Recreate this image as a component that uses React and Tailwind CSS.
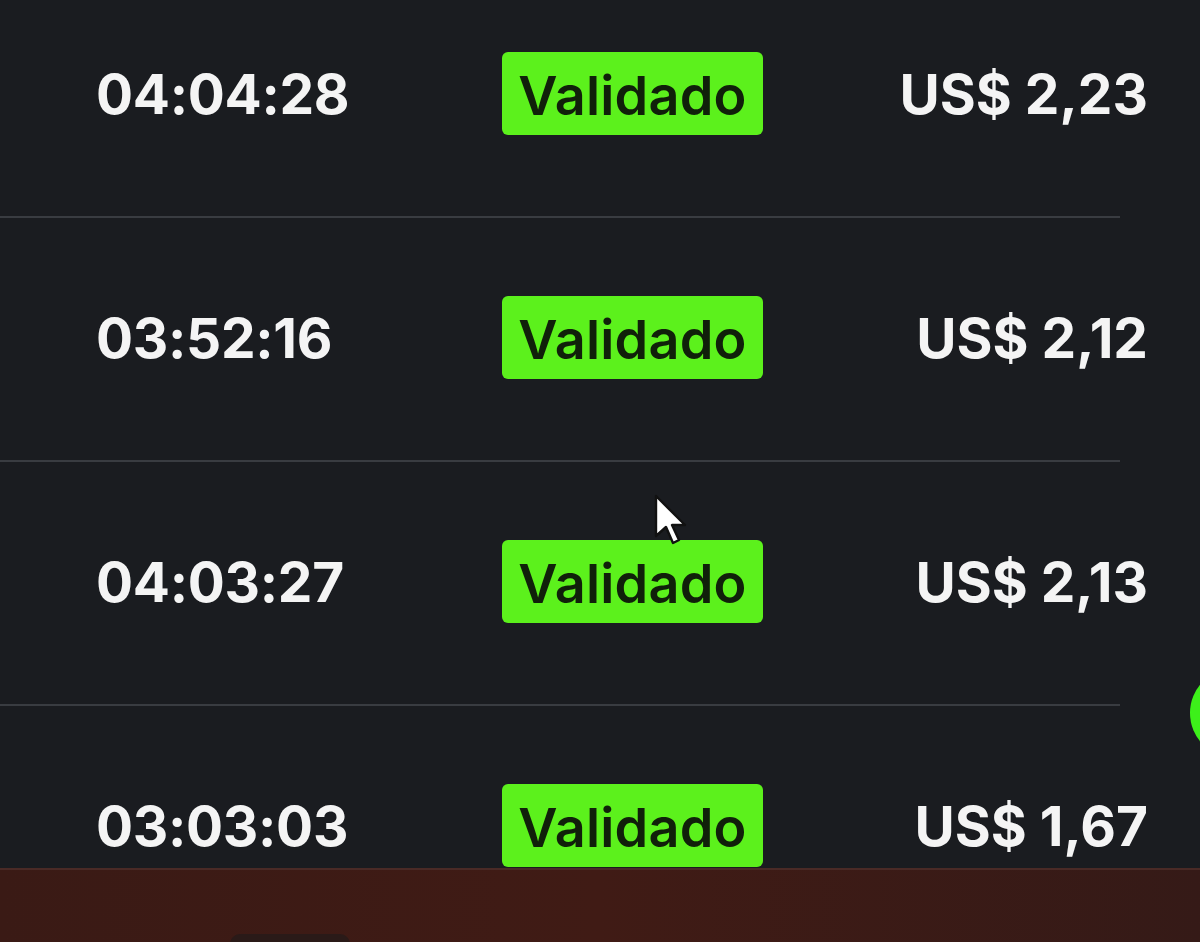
import React from "react";

const rows = [
  { time: "04:04:28", amount: "US$ 2,23" },
  { time: "03:52:16", amount: "US$ 2,12" },
  { time: "04:03:27", amount: "US$ 2,13" },
  { time: "03:03:03", amount: "US$ 1,67" },
];

function Row({ time, amount }) {
  return (
    <div className="flex flex-col shrink-0">
      <div className="h-[242px] flex items-center pb-[3px]">
        <div className="w-[502px] pl-[96px] pt-[2px] text-[55px] font-bold text-[#f4f4f4] tracking-[-0.3px]">
          {time}
        </div>
        <div className="w-[261px] h-[83px] rounded-[6px] bg-[#5cf11c] flex items-center justify-center pt-[4px] text-[54px] font-semibold text-[#10200a] leading-none tracking-[0.2px]">
          Validado
        </div>
        <div className="flex-1 pr-[52px] pt-[2px] text-right text-[55px] font-bold text-[#f4f4f4]">
          {amount}
        </div>
      </div>
      <div className="w-[1120px] h-[2px] bg-[#393c41]" />
    </div>
  );
}

export default function App() {
  return (
    <div
      className="relative w-[1200px] h-[942px] overflow-hidden bg-[#1a1c20] flex flex-col"
      style={{ fontFamily: 'Inter, "Liberation Sans", Arial, sans-serif' }}
    >
      <div className="flex-1 overflow-hidden">
        <div className="-mt-[26px] flex flex-col">
          {rows.map((r) => (
            <Row key={r.time} {...r} />
          ))}
        </div>
      </div>
      <div className="h-[74px] shrink-0 bg-gradient-to-r from-[#3a1a15] via-[#401b15] to-[#351a17] border-t-2 border-[#4a2a26] relative">
        <div className="absolute left-[230px] bottom-[-20px] w-[120px] h-[28px] rounded-[10px] bg-[#2a1a18]" />
      </div>
      <div className="absolute left-[1190px] top-[668px] w-[90px] h-[90px] rounded-full bg-[#3df01a]" />
      <svg
        className="absolute left-[654px] top-[494px]"
        width="40"
        height="58"
        viewBox="0 0 20 29"
      >
        <path
          d="M1 1 L1 21 L6 16.5 L9.5 24.5 L12.5 23 L9 15.5 L15.5 15.5 Z"
          fill="#ffffff"
          stroke="#111111"
          strokeWidth="1.2"
          strokeLinejoin="round"
        />
      </svg>
    </div>
  );
}
